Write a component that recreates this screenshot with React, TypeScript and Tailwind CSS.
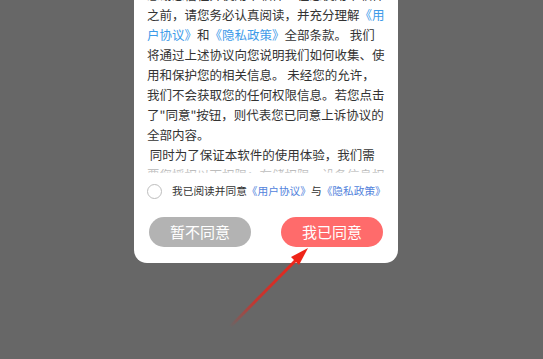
import React from "react";

const LINK = "text-[#3d9be9]";

const lines: React.ReactNode[] = [
  "感谢您信任并使用本软件！在您使用本软件",
  <>之前，请您务必认真阅读，并充分理解<span className={LINK}>《用</span></>,
  <><span className={LINK}>户协议》</span>和<span className={LINK}>《隐私政策》</span>全部条款。 我们</>,
  "将通过上述协议向您说明我们如何收集、使",
  "用和保护您的相关信息。 未经您的允许，",
  "我们不会获取您的任何权限信息。若您点击",
  "了\"同意\"按钮，则代表您已同意上诉协议的",
  "全部内容。",
  "\u00a0同时为了保证本软件的使用体验，我们需",
  "要您授权以下权限：存储权限、设备信息权",
];

export default function App() {
  return (
    <div
      className="relative h-[359px] w-[543px] overflow-hidden bg-[#676767]"
      style={{ fontFamily: '"Noto Sans CJK SC", "Noto Sans", sans-serif' }}
    >
      <div className="ml-[134px] w-[264px] rounded-b-[13px] bg-white">
        {/* scrolled agreement text */}
        <div className="relative h-[173px] overflow-hidden px-[13px]">
          <div className="-mt-[15px] text-[12.5px] leading-[20px] text-[#333]">
            {lines.map((l, i) => (
              <div key={i} className="whitespace-nowrap">
                {l}
              </div>
            ))}
          </div>
          <div className="absolute inset-x-0 bottom-0 h-[8px] bg-gradient-to-b from-white/40 to-white/80" />
        </div>

        <div className="mt-[10px] flex h-[16px] items-center gap-[10px] px-[13px]">
          <span className="h-[15px] w-[15px] shrink-0 rounded-full border border-[#bdbdbd]" />
          <span className="whitespace-nowrap text-[10.7px] text-[#333]">
            我已阅读并同意<span className="text-[#5283dc]">《用户协议》</span>与<span className="text-[#5283dc]">《隐私政策》</span>
          </span>
        </div>

        <div className="mt-[18px] flex justify-between px-[15px] pb-[16px]">
          <button className="h-[30px] w-[102px] rounded-full bg-[#b3b3b3] text-[15px] text-white">
            暂不同意
          </button>
          <button className="h-[30px] w-[102px] rounded-full bg-[#ff6b6b] text-[15px] text-white">
            我已同意
          </button>
        </div>
      </div>

      {/* annotation arrow */}
      <svg className="absolute left-0 top-0" width="543" height="359" viewBox="0 0 543 359">
        <defs>
          <linearGradient id="arr" x1="230" y1="327" x2="300" y2="256" gradientUnits="userSpaceOnUse">
            <stop offset="0" stopColor="#e8231a" stopOpacity="0" />
            <stop offset="0.35" stopColor="#e8231a" stopOpacity="0.7" />
            <stop offset="1" stopColor="#ee2418" />
          </linearGradient>
        </defs>
        <path d="M230 327 L299 257" stroke="url(#arr)" strokeWidth="3" strokeLinecap="round" />
        <path d="M308 248 L291 257 L299 265 Z" fill="#ee2418" />
      </svg>
    </div>
  );
}
